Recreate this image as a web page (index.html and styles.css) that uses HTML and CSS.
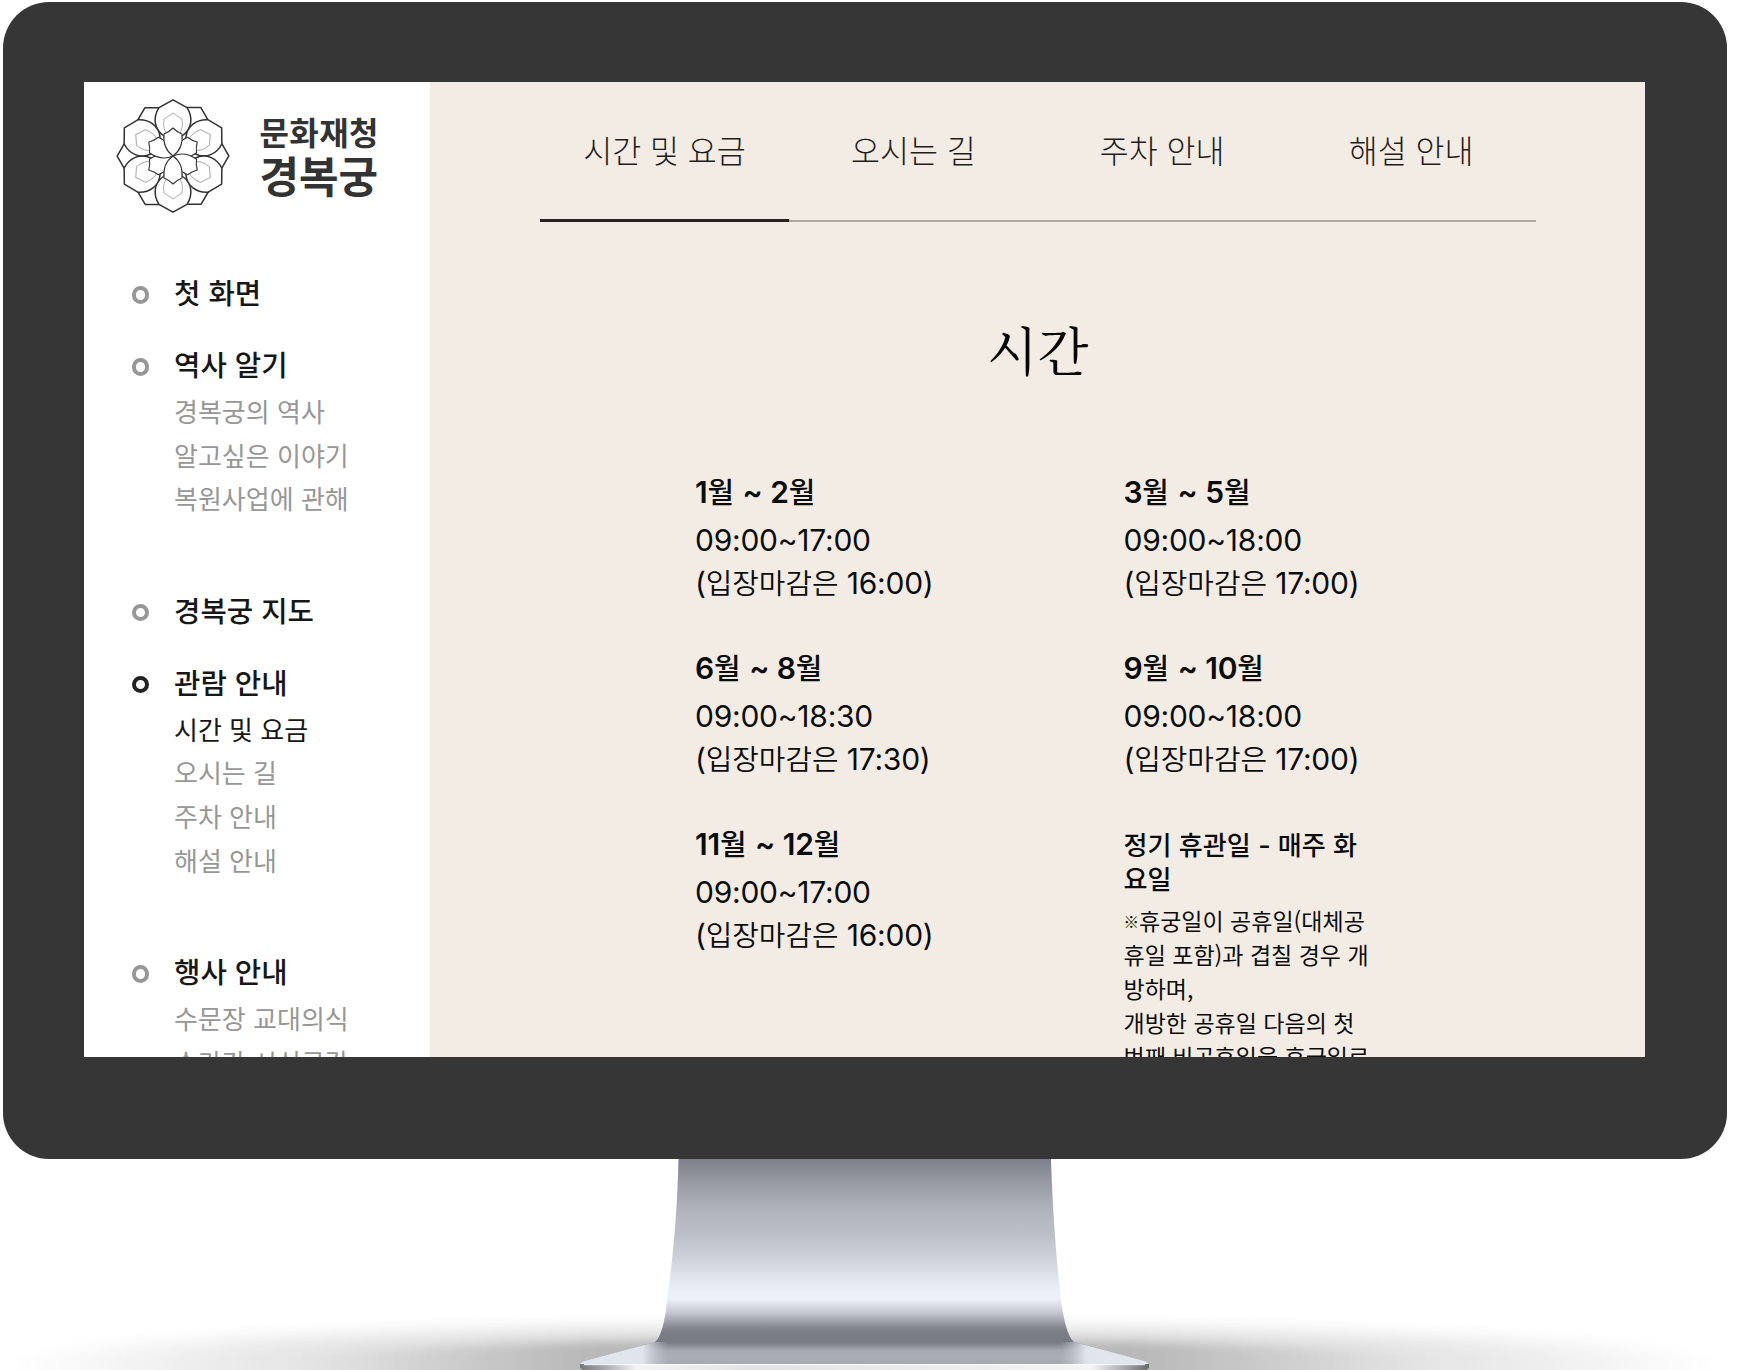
FILE: index.html
```html
<!DOCTYPE html>
<html lang="ko">
<head>
<meta charset="utf-8">
<title>경복궁 - 시간 및 요금</title>
<link rel="stylesheet" href="styles.css">
</head>
<body>
<div class="monitor">
  <div class="screen">
    <aside class="sidebar">
      <a class="logo">
        <svg class="flower" viewBox="-58 -58 116 116" width="116" height="116">
          <defs>
            <path id="tip" d="M-14,-48.3H-28L-35.5,-35.5L-20,-20L0,0Z"/>
            <path id="outer" d="M0,-56.2L-14,-48.3C-20,-39 -19.500,-27 -9,-20L0,0L9,-20C19.500,-27 20,-39 14,-48.300Z"/>
            <path id="thin" d="M-6,-22C-10,-27 -9.500,-32 -9,-37Q-5,-39.500 0,-43Q5,-39.500 9,-37C9.500,-32 10,-27 6,-22"/>
            <path id="inner" d="M0,0C-7,-5 -10,-12 -9,-22Q-4,-24 0,-28Q4,-24 9,-22C10,-12 7,-5 0,0Z"/>
          </defs>
          <g class="line-bold">
            <use href="#tip"/><use href="#tip" transform="rotate(60)"/><use href="#tip" transform="rotate(120)"/><use href="#tip" transform="rotate(180)"/><use href="#tip" transform="rotate(240)"/><use href="#tip" transform="rotate(300)"/>
            <use href="#outer"/><use href="#outer" transform="rotate(180)"/><use href="#outer" transform="rotate(60)"/><use href="#outer" transform="rotate(120)"/><use href="#outer" transform="rotate(240)"/><use href="#outer" transform="rotate(300)"/>
          </g>
          <g class="line-thin">
            <use href="#thin"/><use href="#thin" transform="rotate(60)"/><use href="#thin" transform="rotate(120)"/><use href="#thin" transform="rotate(180)"/><use href="#thin" transform="rotate(240)"/><use href="#thin" transform="rotate(300)"/>
          </g>
          <g class="line-mid">
            <use href="#inner" transform="rotate(60)"/><use href="#inner" transform="rotate(120)"/><use href="#inner" transform="rotate(240)"/><use href="#inner" transform="rotate(300)"/><use href="#inner" transform="rotate(180)"/><use href="#inner"/>
          </g>
        </svg>
        <span class="logo-text"><span class="logo-agency">문화재청</span><span class="logo-name">경복궁</span></span>
      </a>
      <nav class="menu">
        <section class="group"><h2 class="head">첫 화면</h2></section>
        <section class="group has-sub"><h2 class="head">역사 알기</h2>
          <ul class="sub"><li>경복궁의 역사</li><li>알고싶은 이야기</li><li>복원사업에 관해</li></ul></section>
        <section class="group"><h2 class="head">경복궁 지도</h2></section>
        <section class="group has-sub active"><h2 class="head">관람 안내</h2>
          <ul class="sub"><li class="current">시간 및 요금</li><li>오시는 길</li><li>주차 안내</li><li>해설 안내</li></ul></section>
        <section class="group has-sub"><h2 class="head">행사 안내</h2>
          <ul class="sub"><li>수문장 교대의식</li><li>수라간 시식공감</li></ul></section>
      </nav>
    </aside>
    <main class="content">
      <nav class="tabs"><a class="tab selected">시간 및 요금</a><a class="tab">오시는 길</a><a class="tab">주차 안내</a><a class="tab">해설 안내</a></nav>
      <h1 class="title">시간</h1>
      <div class="hours">
        <section class="period"><h3><b>1</b>월 <b>~ 2</b>월</h3><p><b>09:00~17:00</b></p><p><b>(</b>입장마감은<b> 16:00)</b></p></section>
        <section class="period"><h3><b>3</b>월 <b>~ 5</b>월</h3><p><b>09:00~18:00</b></p><p><b>(</b>입장마감은<b> 17:00)</b></p></section>
        <section class="period"><h3><b>6</b>월 <b>~ 8</b>월</h3><p><b>09:00~18:30</b></p><p><b>(</b>입장마감은<b> 17:30)</b></p></section>
        <section class="period"><h3><b>9</b>월 <b>~ 10</b>월</h3><p><b>09:00~18:00</b></p><p><b>(</b>입장마감은<b> 17:00)</b></p></section>
        <section class="period"><h3><b>11</b>월 <b>~ 12</b>월</h3><p><b>09:00~17:00</b></p><p><b>(</b>입장마감은<b> 16:00)</b></p></section>
        <section class="closed"><h3>정기 휴관일 <b>-</b> 매주 화<br>요일</h3><p><span class="mark">※</span>휴궁일이 공휴일(대체공<br>휴일 포함)과 겹칠 경우 개<br>방하며,<br>개방한 공휴일 다음의 첫<br>번째 비공휴일을 휴궁일로</p></section>
      </div>
    </main>
  </div>
</div>
<svg class="stand" viewBox="0 1159 1737 211" width="1737" height="211">
  <defs>
    <linearGradient id="metal" gradientUnits="userSpaceOnUse" x1="0" y1="1159" x2="0" y2="1365">
      <stop offset="0" stop-color="#7d8088"/><stop offset=".12" stop-color="#9a9ca5"/><stop offset=".25" stop-color="#b1b4bd"/><stop offset=".37" stop-color="#bdc0c9"/><stop offset=".49" stop-color="#d0d3dc"/><stop offset=".59" stop-color="#e3e7f0"/><stop offset=".65" stop-color="#ecf0f9"/><stop offset=".68" stop-color="#edf0f8"/><stop offset=".75" stop-color="#c2c5cd"/><stop offset=".81" stop-color="#8b8e96"/><stop offset=".84" stop-color="#7a7d85"/><stop offset=".89" stop-color="#787b83"/><stop offset=".93" stop-color="#a6a9b2"/><stop offset=".96" stop-color="#abaeb7"/><stop offset="1" stop-color="#a5a8b1"/>
    </linearGradient>
    <linearGradient id="wing" gradientUnits="userSpaceOnUse" x1="580" y1="0" x2="1149" y2="0">
      <stop offset="0" stop-color="#e2e6ee"/><stop offset=".11" stop-color="#e0e4ed"/><stop offset=".155" stop-color="#c6c9d2" stop-opacity="0"/><stop offset=".845" stop-color="#c6c9d2" stop-opacity="0"/><stop offset=".89" stop-color="#e0e4ed"/><stop offset="1" stop-color="#e2e6ee"/>
    </linearGradient>
    <linearGradient id="lip" gradientUnits="userSpaceOnUse" x1="580" y1="0" x2="1149" y2="0">
      <stop offset="0" stop-color="#77787c"/><stop offset=".04" stop-color="#a4a5a9"/><stop offset=".1" stop-color="#f4f4f6"/><stop offset=".3" stop-color="#e2e2e4"/><stop offset=".9" stop-color="#f4f4f6"/><stop offset=".96" stop-color="#a4a5a9"/><stop offset="1" stop-color="#67686c"/>
    </linearGradient>
    <linearGradient id="shade" x1="0" x2="1" y1="0" y2="0">
      <stop offset="0" stop-color="#000" stop-opacity="0"/><stop offset=".16" stop-color="#000" stop-opacity=".12"/><stop offset=".34" stop-color="#000" stop-opacity=".2"/><stop offset=".66" stop-color="#000" stop-opacity=".2"/><stop offset=".84" stop-color="#000" stop-opacity=".12"/><stop offset="1" stop-color="#000" stop-opacity="0"/>
    </linearGradient>
    <linearGradient id="core" x1="0" x2="1" y1="0" y2="0">
      <stop offset="0" stop-color="#000" stop-opacity="0"/><stop offset=".25" stop-color="#000" stop-opacity=".14"/><stop offset=".75" stop-color="#000" stop-opacity=".14"/><stop offset="1" stop-color="#000" stop-opacity="0"/>
    </linearGradient>
    <filter id="soft" x="-10%" y="-100%" width="120%" height="300%"><feGaussianBlur stdDeviation="14 9"/></filter>
    <filter id="edge" x="-10%" y="-100%" width="120%" height="300%"><feGaussianBlur stdDeviation="20 4"/></filter>
  </defs>
  <ellipse cx="864" cy="1364" rx="870" ry="36" fill="url(#shade)" opacity=".8" filter="url(#soft)"/>
  <ellipse cx="864" cy="1364" rx="560" ry="25" fill="url(#core)" filter="url(#edge)"/>
  <path fill="url(#metal)" d="M678.500,1159H1051C1053,1220 1057,1265 1061,1300C1064,1322 1068,1337 1074,1342L1146,1361.500Q1149,1363 1149,1365H580Q580,1363 583,1361.500L655,1342C661,1337 665,1322 667,1300C672,1265 677,1220 678.500,1159Z"/>
  <path fill="url(#wing)" d="M655,1342H1074L1146,1361.500Q1149,1363 1149,1365H580Q580,1363 583,1361.500Z"/>
  <path fill="url(#lip)" d="M580,1364H1149V1368L1146,1370H583L580,1368Z"/>
  <path fill="#fff" opacity=".8" d="M584,1364H1145V1365.200H584Z"/>
</svg>
</body>
</html>
```
FILE: styles.css
```css
*, *::before { box-sizing: border-box; margin: 0; padding: 0; }
body { width: 1737px; height: 1370px; overflow: hidden; background: #fff; color: #0c0c0c; font-family: "Noto Sans CJK KR", sans-serif; }
.monitor { width: 1724px; height: 1157px; margin: 2px 0 0 3px; padding: 80px 81px 102px; background: #363636; border-radius: 46px; }
.screen { display: flex; width: 1561px; height: 975px; overflow: hidden; background: #f3ece5; }
.stand { display: block; }

.sidebar { flex: none; width: 346px; height: 975px; background: #fff; }
.logo { display: flex; align-items: center; gap: 28.500px; height: 148px; padding-left: 31px; color: #333; }
.flower { flex: none; fill: #fff; stroke: #333; stroke-linejoin: round; }
.line-bold { stroke-width: 1.5; }
.line-mid { stroke-width: 1.1; }
.line-thin { stroke-width: .6; stroke: #777; fill: none; }
.logo-text { display: flex; flex-direction: column; padding-top: 1px; font-weight: 700; white-space: nowrap; }
.logo-agency { font-size: 32px; line-height: 36px; letter-spacing: .4px; }
.logo-name { font-size: 43px; line-height: 51px; }

.menu { padding: 40px 0 0 42px; }
.group { height: 72px; padding-left: 48px; }
.has-sub { height: auto; padding-bottom: 67.500px; }
.head { display: flex; align-items: center; height: 43px; margin-left: -48px; color: #171717; font-size: 28.700px; font-weight: 500; line-height: 43px; white-space: nowrap; }
.head::before { content: ""; width: 17.500px; height: 17.500px; margin: 7px 25px 0 5.500px; border: 4px solid #979797; border-radius: 50%; }
.active .head::before { border-color: #222; }
.sub { padding-top: 4px; list-style: none; color: #979797; font-size: 26px; line-height: 43.700px; white-space: nowrap; }
.current { color: #171717; }

.content { width: 1215px; padding: 0 109.500px 0 110px; }
.tabs { display: grid; grid-template-columns: repeat(4, 1fr); height: 140px; border-bottom: 2px solid #adaaa6; }
.tab { height: 140px; padding-top: 42px; color: #1f1c1c; font-size: 31.500px; font-weight: 300; line-height: 50px; text-align: center; white-space: nowrap; }
.selected { border-bottom: 3.500px solid #282321; }
.title { margin-top: 87px; font-family: "Noto Serif CJK KR", "Noto Serif KR", "Noto Sans CJK KR", serif; font-size: 52.500px; font-weight: 400; line-height: 80px; text-align: center; color: #080808; }
.hours { display: grid; grid-template-columns: 428.500px 300px; grid-auto-rows: 176px; margin: 80px 0 0 155px; white-space: nowrap; }
.period h3 { height: 47.500px; font-size: 28.900px; font-weight: 500; line-height: 43px; word-spacing: .5px; }
.period p { font-size: 28.900px; font-weight: 350; line-height: 43.200px; }
.hours b { font-family: Inter, sans-serif; font-size: 30px; font-weight: 370; font-feature-settings: "calt" 0; letter-spacing: -.25px; line-height: 0; }
.period h3 b { font-weight: 600; }
.closed h3 { padding-top: 7px; font-size: 26.100px; font-weight: 500; line-height: 33.500px; }
.closed h3 b { font-size: 27px; font-weight: 500; }
.closed p { padding-top: 7.500px; font-size: 23px; line-height: 34px; }
.mark { font-size: 15.500px; font-weight: 900; line-height: 0; vertical-align: 2px; }
```
